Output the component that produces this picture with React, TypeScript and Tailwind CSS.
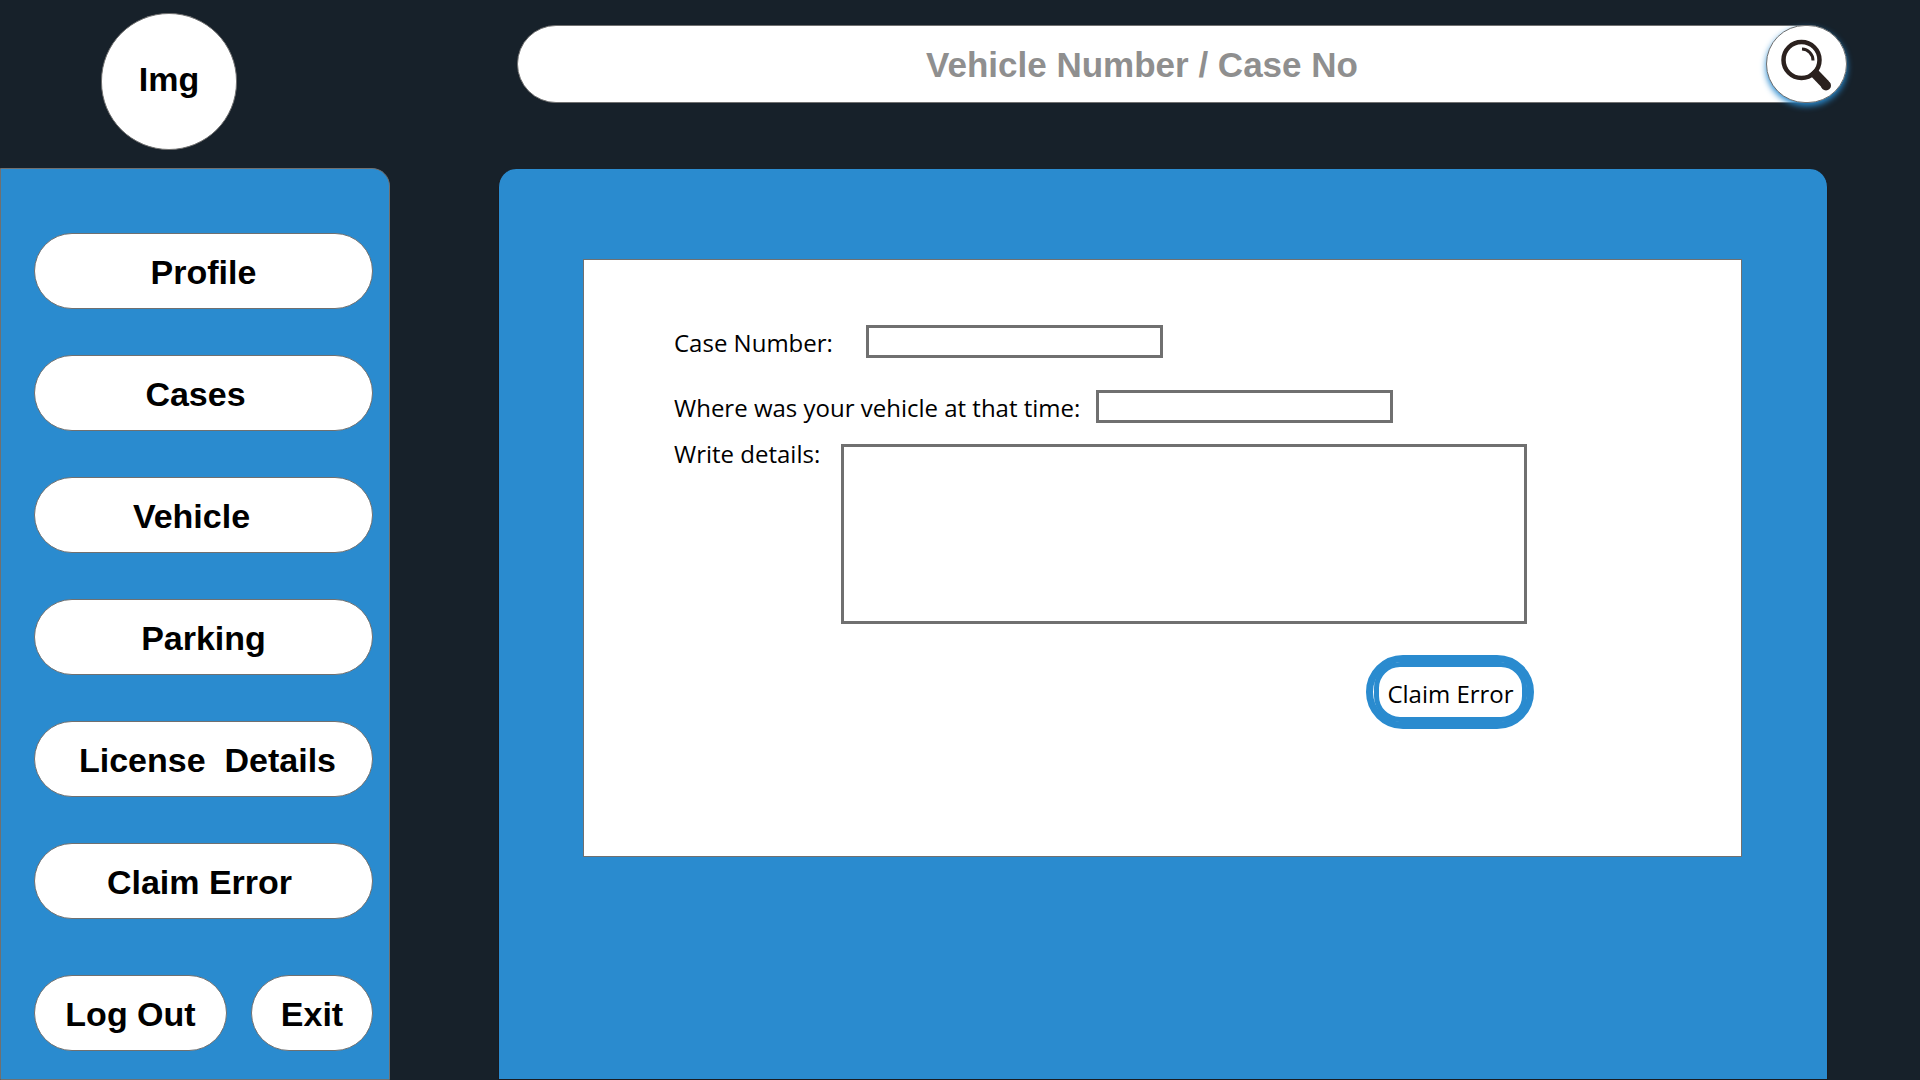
const navItems = [
  { label: 'Profile', inset: '' },
  { label: 'Cases', inset: 'pr-4' },
  { label: 'Vehicle', inset: 'pr-6' },
  { label: 'Parking', inset: '' },
  { label: 'License  Details', inset: 'pl-2' },
  { label: 'Claim Error', inset: 'pr-2' },
];

const pill =
  'flex h-[76px] items-center justify-center whitespace-pre rounded-full border border-[#707070] bg-white pt-0.5 text-[34px] font-bold text-black';

const field = 'border-3 border-[#707070] bg-white px-2 text-lg outline-none';

function SearchIcon() {
  return (
    <svg viewBox="1 1 78 76" className="h-full w-full" aria-hidden="true">
      <circle cx="35" cy="35" r="18" fill="none" stroke="#2b211e" strokeWidth="4.500" />
      <path d="M35.500 24A11.500 11.500 0 0 1 46.500 35.500" fill="none" stroke="#2b211e" strokeWidth="3" />
      <path d="M46 46L59 59.500" stroke="#2b211e" strokeWidth="9.500" />
      <circle cx="59.500" cy="60.500" r="5" fill="#2b211e" />
    </svg>
  );
}

export default function App() {
  return (
    <div className="flex min-h-screen flex-col bg-[#17212a] font-['Liberation_Sans',sans-serif]">
      <header className="flex h-[168px] shrink-0 items-start pr-[73px]">
        <div className="w-[517px] shrink-0 pt-[13px] pl-[101px]">
          <div className="flex h-[137px] w-[136px] items-center justify-center rounded-full border border-[#707070] bg-white pb-1 text-[34px] font-bold">
            Img
          </div>
        </div>
        <form className="mt-[25px] flex h-[78px] grow rounded-full border border-[#707070] bg-white" role="search">
          <input
            type="text"
            aria-label="Vehicle Number / Case No"
            placeholder="Vehicle Number / Case No"
            className="min-w-0 grow rounded-l-full bg-transparent pt-0.5 text-center text-[35px] font-bold outline-none placeholder:text-[#8f8f8f]"
          />
          <button
            type="button"
            aria-label="Search"
            className="-my-px -mr-px w-[81px] shrink-0 rounded-full border border-[#707070] bg-white shadow-[0_3px_6px_#2a8bcf]"
          >
            <SearchIcon />
          </button>
        </form>
      </header>

      <div className="flex grow items-stretch">
        <nav className="w-[390px] shrink-0 rounded-tr-[18px] border border-[#707070] bg-[#2a8bcf] pt-16 pr-4 pb-7 pl-[33px]">
          <ul className="flex flex-col gap-[46px]">
            {navItems.map((item) => (
              <li key={item.label}>
                <button type="button" className={`${pill} w-full ${item.inset}`}>
                  {item.label}
                </button>
              </li>
            ))}
          </ul>
          <div className="mt-14 flex gap-6">
            <button type="button" className={`${pill} w-[193px]`}>
              Log Out
            </button>
            <button type="button" className={`${pill} grow`}>
              Exit
            </button>
          </div>
        </nav>

        <main className="mt-px mr-[92px] ml-[108px] grow rounded-t-[18px] border-x border-b border-[#1a1b20] bg-[#2a8bcf] pt-[90px] pr-[85px] pl-[84px]">
          <form className="flex flex-col border border-[#707070] bg-white pt-[65px] pr-[207px] pb-[127px] pl-[90px] font-['Open_Sans',sans-serif] text-2xl text-black">
            <div className="flex h-[33px] items-center">
              <label htmlFor="case-number" className="w-48 shrink-0 pt-[3px] whitespace-nowrap">
                Case Number:
              </label>
              <input id="case-number" type="text" className={`${field} h-[33px] w-[297px]`} />
            </div>
            <div className="mt-8 flex h-[33px] items-center">
              <label htmlFor="vehicle-location" className="w-[422px] shrink-0 pt-[3px] whitespace-nowrap">
                Where was your vehicle at that time:
              </label>
              <input id="vehicle-location" type="text" className={`${field} h-[33px] w-[297px]`} />
            </div>
            <div className="mt-[21px] mr-[7px] flex items-start">
              <label htmlFor="details" className="w-[167px] shrink-0 leading-5 whitespace-nowrap">
                Write details:
              </label>
              <textarea id="details" className={`${field} h-[180px] min-w-0 grow resize-none`} />
            </div>
            <button
              type="submit"
              className="mt-[31px] flex h-[74px] w-[168px] self-end rounded-full border-7 border-[#2a8bcf] bg-white pl-px"
            >
              <span className="flex h-full w-full items-center justify-center rounded-[26px] border-5 border-[#2a8bcf] pt-[3px] whitespace-nowrap">
                Claim Error
              </span>
            </button>
          </form>
        </main>
      </div>
    </div>
  );
}
